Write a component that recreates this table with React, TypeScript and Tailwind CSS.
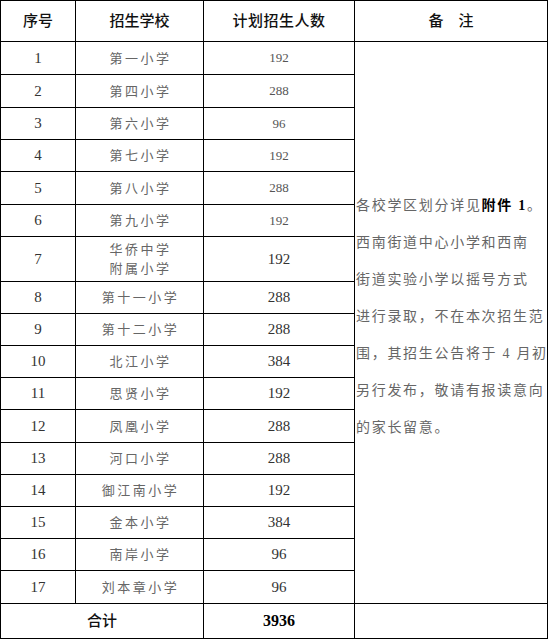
const rows = [
  { no: 1, name: ['第一小学'], count: 192, small: true, h: 'h-[33px]' },
  { no: 2, name: ['第四小学'], count: 288, small: true, h: 'h-[33px]' },
  { no: 3, name: ['第六小学'], count: 96, small: true, h: 'h-[32px]' },
  { no: 4, name: ['第七小学'], count: 192, small: true, h: 'h-[32px]' },
  { no: 5, name: ['第八小学'], count: 288, small: true, h: 'h-[33px]' },
  { no: 6, name: ['第九小学'], count: 192, small: true, h: 'h-[32px]' },
  { no: 7, name: ['华侨中学', '附属小学'], count: 192, h: 'h-[45px]' },
  { no: 8, name: ['第十一小学'], count: 288, h: 'h-[32px]' },
  { no: 9, name: ['第十二小学'], count: 288, h: 'h-[32px]' },
  { no: 10, name: ['北江小学'], count: 384, h: 'h-[32px]' },
  { no: 11, name: ['思贤小学'], count: 192, h: 'h-[32px]' },
  { no: 12, name: ['凤凰小学'], count: 288, h: 'h-[33px]' },
  { no: 13, name: ['河口小学'], count: 288, h: 'h-[32px]' },
  { no: 14, name: ['御江南小学'], count: 192, h: 'h-[32px]' },
  { no: 15, name: ['金本小学'], count: 384, h: 'h-[32px]' },
  { no: 16, name: ['南岸小学'], count: 96, h: 'h-[32px]' },
  { no: 17, name: ['刘本章小学'], count: 96, h: 'h-[33px]' },
];

const noteLines = [
  <>各校学区划分详见<b className="font-bold text-black">附件 1</b>。</>,
  <>西南街道中心小学和西南</>,
  <>街道实验小学以摇号方式</>,
  <>进行录取，不在本次招生范</>,
  <>围，其招生公告将于 4 月初</>,
  <>另行发布，敬请有报读意向</>,
  <>的家长留意。</>,
];

export default function App() {
  return (
    <div className="w-[548px] h-[639px] bg-white font-['Liberation_Serif','Noto_Sans_CJK_SC',serif]">
      <table className="w-[547px] table-fixed border-collapse border border-black">
        <colgroup>
          <col className="w-[75px]" />
          <col className="w-[128px]" />
          <col className="w-[151px]" />
          <col className="w-[193px]" />
        </colgroup>
        <thead>
          <tr className="h-[41px] text-[15px] font-medium text-[#111]">
            <th className="border border-black text-center font-medium">序号</th>
            <th className="border border-black text-center font-medium">招生学校</th>
            <th className="border border-black text-center font-medium tracking-[0.5px]">计划招生人数</th>
            <th className="border border-black text-center font-medium">备　注</th>
          </tr>
        </thead>
        <tbody>
          {rows.map((r, i) => (
            <tr key={r.no} className={r.h}>
              <td className="border border-black p-0 text-center text-[15px] text-[#333]">{r.no}</td>
              <td className="border border-black p-0 pl-[2px] text-center text-[13px] tracking-[2.5px] leading-[19px] text-[#666]">
                {r.name.map((n) => (
                  <div key={n}>{n}</div>
                ))}
              </td>
              <td
                className={`border border-black p-0 text-center ${
                  r.small ? 'text-[13px] text-[#555]' : 'text-[15px] text-[#333]'
                }`}
              >
                {r.count}
              </td>
              {i === 0 && (
                <td rowSpan={17} className="border border-black p-0 pl-[1px] align-middle">
                  <div className="pb-[12px] text-[14px] leading-[37px] tracking-[1.7px] whitespace-nowrap text-[#666]">
                    {noteLines.map((l, k) => (
                      <div key={k}>{l}</div>
                    ))}
                  </div>
                </td>
              )}
            </tr>
          ))}
          <tr className="h-[35px]">
            <td colSpan={2} className="border border-black p-0 text-center text-[15px] font-medium text-[#111]">
              合计
            </td>
            <td className="border border-black p-0 text-center text-[16px] font-bold text-black">3936</td>
          </tr>
        </tbody>
      </table>
    </div>
  );
}
